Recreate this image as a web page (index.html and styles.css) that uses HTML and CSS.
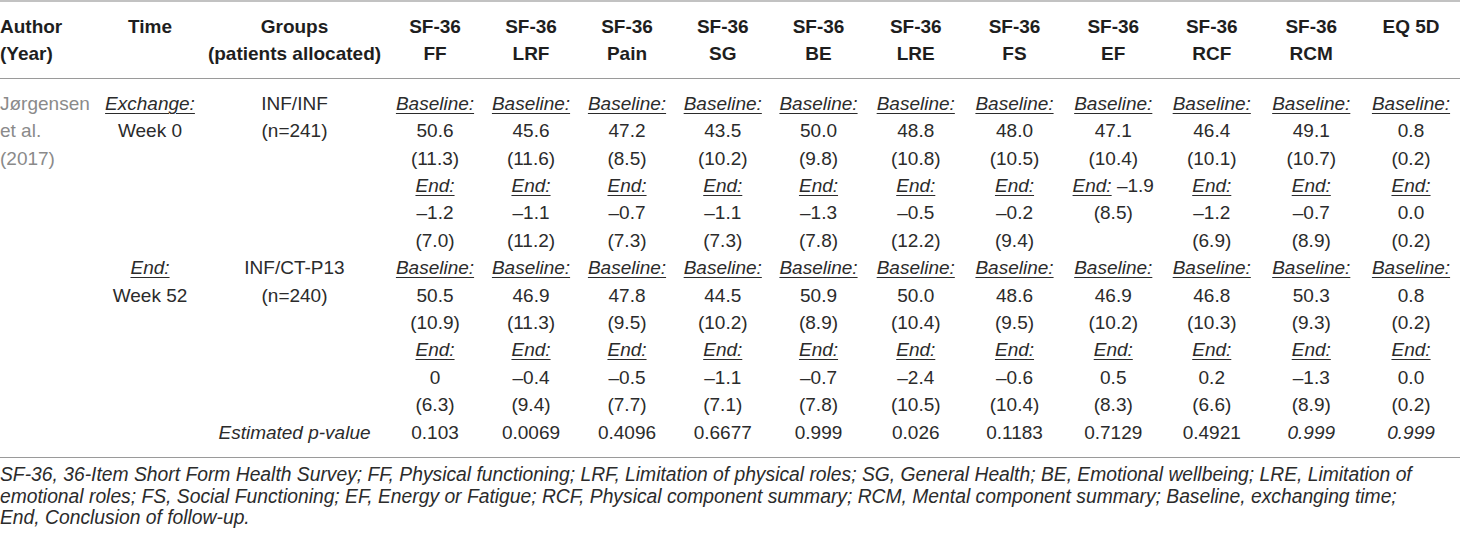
FILE: index.html
```html
<!DOCTYPE html>
<html>
<head>
<meta charset="utf-8">
<link rel="stylesheet" href="styles.css">
</head>
<body>
<table class="tbl">
  <colgroup>
    <col class="c-author"><col class="c-time"><col class="c-group">
    <col class="c-d1"><col class="c-d2"><col class="c-d3"><col class="c-d4"><col class="c-d5"><col class="c-d6"><col class="c-d7"><col class="c-d8"><col class="c-d9"><col class="c-d10"><col class="c-d11">
  </colgroup>
  <thead>
    <tr>
      <th class="left">Author<br>(Year)</th>
      <th>Time</th>
      <th>Groups<br>(patients allocated)</th>
      <th>SF-36<br>FF</th>
      <th>SF-36<br>LRF</th>
      <th>SF-36<br>Pain</th>
      <th>SF-36<br>SG</th>
      <th>SF-36<br>BE</th>
      <th>SF-36<br>LRE</th>
      <th>SF-36<br>FS</th>
      <th>SF-36<br>EF</th>
      <th>SF-36<br>RCF</th>
      <th>SF-36<br>RCM</th>
      <th>EQ 5D</th>
    </tr>
  </thead>
  <tbody>
    <tr class="first">
      <td class="left author">Jørgensen<br>et al.<br>(2017)</td>
      <td><span class="lbl">Exchange:</span><br>Week 0</td>
      <td>INF/INF<br>(n=241)</td>
      <td><span class="lbl">Baseline:</span><br>50.6<br>(11.3)<br><span class="lbl">End:</span><br>–1.2<br>(7.0)</td>
      <td><span class="lbl">Baseline:</span><br>45.6<br>(11.6)<br><span class="lbl">End:</span><br>–1.1<br>(11.2)</td>
      <td><span class="lbl">Baseline:</span><br>47.2<br>(8.5)<br><span class="lbl">End:</span><br>–0.7<br>(7.3)</td>
      <td><span class="lbl">Baseline:</span><br>43.5<br>(10.2)<br><span class="lbl">End:</span><br>–1.1<br>(7.3)</td>
      <td><span class="lbl">Baseline:</span><br>50.0<br>(9.8)<br><span class="lbl">End:</span><br>–1.3<br>(7.8)</td>
      <td><span class="lbl">Baseline:</span><br>48.8<br>(10.8)<br><span class="lbl">End:</span><br>–0.5<br>(12.2)</td>
      <td><span class="lbl">Baseline:</span><br>48.0<br>(10.5)<br><span class="lbl">End:</span><br>–0.2<br>(9.4)</td>
      <td><span class="lbl">Baseline:</span><br>47.1<br>(10.4)<br><span class="lbl">End:</span> –1.9<br>(8.5)</td>
      <td><span class="lbl">Baseline:</span><br>46.4<br>(10.1)<br><span class="lbl">End:</span><br>–1.2<br>(6.9)</td>
      <td><span class="lbl">Baseline:</span><br>49.1<br>(10.7)<br><span class="lbl">End:</span><br>–0.7<br>(8.9)</td>
      <td><span class="lbl">Baseline:</span><br>0.8<br>(0.2)<br><span class="lbl">End:</span><br>0.0<br>(0.2)</td>
    </tr>
    <tr>
      <td class="left"></td>
      <td><span class="lbl">End:</span><br>Week 52</td>
      <td>INF/CT-P13<br>(n=240)</td>
      <td><span class="lbl">Baseline:</span><br>50.5<br>(10.9)<br><span class="lbl">End:</span><br>0<br>(6.3)</td>
      <td><span class="lbl">Baseline:</span><br>46.9<br>(11.3)<br><span class="lbl">End:</span><br>–0.4<br>(9.4)</td>
      <td><span class="lbl">Baseline:</span><br>47.8<br>(9.5)<br><span class="lbl">End:</span><br>–0.5<br>(7.7)</td>
      <td><span class="lbl">Baseline:</span><br>44.5<br>(10.2)<br><span class="lbl">End:</span><br>–1.1<br>(7.1)</td>
      <td><span class="lbl">Baseline:</span><br>50.9<br>(8.9)<br><span class="lbl">End:</span><br>–0.7<br>(7.8)</td>
      <td><span class="lbl">Baseline:</span><br>50.0<br>(10.4)<br><span class="lbl">End:</span><br>–2.4<br>(10.5)</td>
      <td><span class="lbl">Baseline:</span><br>48.6<br>(9.5)<br><span class="lbl">End:</span><br>–0.6<br>(10.4)</td>
      <td><span class="lbl">Baseline:</span><br>46.9<br>(10.2)<br><span class="lbl">End:</span><br>0.5<br>(8.3)</td>
      <td><span class="lbl">Baseline:</span><br>46.8<br>(10.3)<br><span class="lbl">End:</span><br>0.2<br>(6.6)</td>
      <td><span class="lbl">Baseline:</span><br>50.3<br>(9.3)<br><span class="lbl">End:</span><br>–1.3<br>(8.9)</td>
      <td><span class="lbl">Baseline:</span><br>0.8<br>(0.2)<br><span class="lbl">End:</span><br>0.0<br>(0.2)</td>
    </tr>
    <tr class="last">
      <td class="left"></td>
      <td></td>
      <td><em>Estimated p-value</em></td>
      <td>0.103</td>
      <td>0.0069</td>
      <td>0.4096</td>
      <td>0.6677</td>
      <td>0.999</td>
      <td>0.026</td>
      <td>0.1183</td>
      <td>0.7129</td>
      <td>0.4921</td>
      <td><em>0.999</em></td>
      <td><em>0.999</em></td>
    </tr>
  </tbody>
</table>
<p class="note">
  <span class="note-line">SF-36, 36-Item Short Form Health Survey; FF, Physical functioning; LRF, Limitation of physical roles; SG, General Health; BE, Emotional wellbeing; LRE, Limitation of</span>
  <span class="note-line">emotional roles; FS, Social Functioning; EF, Energy or Fatigue; RCF, Physical component summary; RCM, Mental component summary; Baseline, exchanging time;</span>
  <span class="note-line">End, Conclusion of follow-up.</span>
</p>
</body>
</html>
```

FILE: styles.css
```css
html, body {
  margin: 0;
  padding: 0;
  background: #ffffff;
}

body {
  font-family: "Liberation Sans", Arial, sans-serif;
  color: #2b2b2b;
  width: 1460px;
}

.tbl {
  width: 1460px;
  border-collapse: collapse;
  table-layout: fixed;
  border-top: 2px solid #c2c2c2;
  font-size: 19px;
  line-height: 27.4px;
}

.c-author { width: 98px; }
.c-time { width: 104px; }
.c-group { width: 185px; }
.c-d1, .c-d2, .c-d3, .c-d5 { width: 96px; }
.c-d4 { width: 95.5px; }
.c-d6, .c-d8, .c-d9 { width: 98.5px; }
.c-d7, .c-d11 { width: 99px; }
.c-d10 { width: 100.5px; }

th, td {
  padding: 0;
  text-align: center;
  vertical-align: top;
  white-space: nowrap;
}

th {
  font-weight: bold;
  color: #1e1e1e;
  padding-top: 11px;
  padding-bottom: 10px;
}

thead tr {
  border-bottom: 1px solid #9a9a9a;
}

.left {
  text-align: left;
}

.author {
  color: #8a8a8a;
}

tr.first td {
  padding-top: 11px;
}

tr.last td {
  padding-bottom: 11px;
}

tbody tr.last {
  border-bottom: 1px solid #9a9a9a;
}

.lbl {
  font-style: italic;
  text-decoration: underline;
  text-underline-offset: 3px;
  text-decoration-thickness: 1px;
}

.note {
  margin: 6px 0 0 0;
  font-style: italic;
  font-size: 19.3px;
  line-height: 21.5px;
  color: #2b2b2b;
}

.note-line {
  display: block;
  white-space: nowrap;
}
```
